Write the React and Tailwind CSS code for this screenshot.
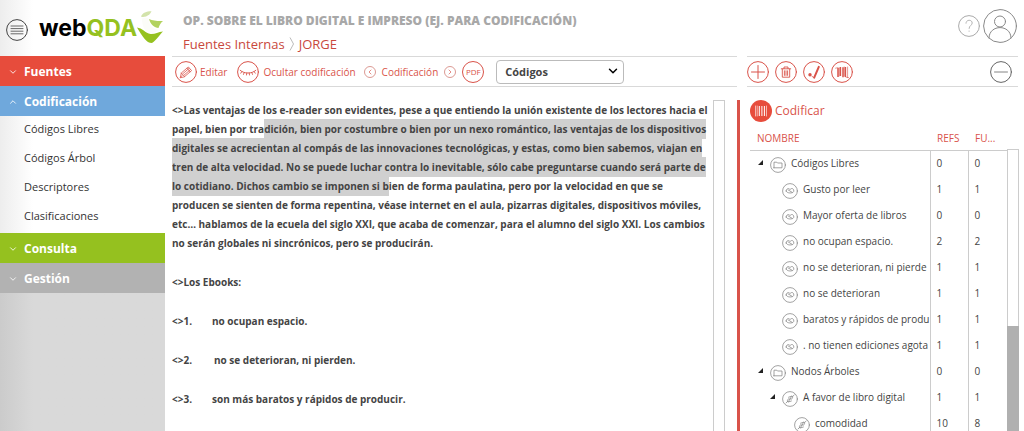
import React from 'react';
import { ChevronDown, ChevronUp, ChevronLeft, ChevronRight } from 'lucide-react';

const sections = [
  { title: 'Fuentes', color: 'bg-[#e74c3c]' },
  {
    title: 'Codificación',
    color: 'bg-[#6fa8dc]',
    items: ['Códigos Libres', 'Códigos Árbol', 'Descriptores', 'Clasificaciones'],
  },
  { title: 'Consulta', color: 'bg-[#95c11f]' },
  { title: 'Gestión', color: 'bg-[#b2b2b2]' },
];

const rows = [
  { name: 'Códigos Libres', refs: 0, sources: 0, level: 0, kind: 'folder', open: true },
  { name: 'Gusto por leer', refs: 1, sources: 1, level: 1, kind: 'code' },
  { name: 'Mayor oferta de libros', refs: 0, sources: 0, level: 1, kind: 'code' },
  { name: 'no ocupan espacio.', refs: 2, sources: 2, level: 1, kind: 'code' },
  { name: 'no se deterioran, ni pierde', refs: 1, sources: 1, level: 1, kind: 'code' },
  { name: 'no se deterioran', refs: 1, sources: 1, level: 1, kind: 'code' },
  { name: 'baratos y rápidos de produ', refs: 1, sources: 1, level: 1, kind: 'code' },
  { name: '. no tienen ediciones agota', refs: 1, sources: 1, level: 1, kind: 'code' },
  { name: 'Nodos Árboles', refs: 0, sources: 0, level: 0, kind: 'folder', open: true },
  { name: 'A favor de libro digital', refs: 1, sources: 1, level: 1, kind: 'tree', open: true },
  { name: 'comodidad', refs: 10, sources: 8, level: 2, kind: 'tree' },
];

const indent = ['pl-2', 'pl-5', 'pl-8'];

const Svg = ({ size = 'size-[22px]', box = 22, children }) => (
  <svg className={`${size} shrink-0`} viewBox={`0 0 ${box} ${box}`} fill="none" stroke="currentColor" strokeLinecap="round" strokeLinejoin="round" aria-hidden="true">
    {children}
  </svg>
);

const Ring = () => <circle cx="11" cy="11" r="10.4" strokeWidth="1" />;

const MenuIcon = () => (
  <Svg>
    <Ring />
    <path d="M5 7h12M5 9.6h12M5 12.2h12M5 14.8h12" strokeWidth="0.8" />
  </Svg>
);

const PencilIcon = () => (
  <Svg>
    <Ring />
    <path d="M5.4 16.4l.9-4.4 7-6 3.3 3.6-7 6zM6.3 12l3.3 3.6M12 7.2l3.2 3.7M8 12.6l6-5.2M9.2 14l6-5.2M5.4 16.4l1.7-1.8" strokeWidth="0.8" />
  </Svg>
);

const EyeIcon = () => (
  <Svg>
    <Ring />
    <path d="M3.2 9.3c2.2 1.9 4.8 2.7 7.8 2.7s5.6-.8 7.8-2.7M4.8 10.6l-1 1.6M7.2 11.6l-.7 1.8M9.8 12l-.3 2M12.2 12l.3 2M14.8 11.6l.7 1.8M17.2 10.6l1 1.6" strokeWidth="0.9" />
  </Svg>
);

const PlusIcon = () => (
  <Svg>
    <Ring />
    <path d="M11 4.5v13M4.5 11h13" strokeWidth="1" />
  </Svg>
);

const MinusIcon = () => (
  <Svg>
    <Ring />
    <path d="M4.5 11h13" strokeWidth="0.8" />
  </Svg>
);

const TrashIcon = () => (
  <Svg>
    <Ring />
    <path d="M6.3 7.8h9.4M9 7.6V6h4v1.6M7.3 8v8.2h7.4V8M9.4 9.8v4.6M11 9.8v4.6M12.6 9.8v4.6" strokeWidth="0.9" />
  </Svg>
);

const BrushIcon = () => (
  <Svg>
    <Ring />
    <path d="M15.8 5.8L11.2 16.6" strokeWidth="2" />
    <circle cx="7" cy="13.8" r="1.7" fill="currentColor" stroke="none" />
    <path d="M9 15.4l2 1.2" strokeWidth="0.8" />
  </Svg>
);

const UncodeIcon = () => (
  <Svg>
    <Ring />
    <path d="M7 7v9M9.4 6v9M12 6.3v10M14.4 6v10" strokeWidth="1.5" strokeLinecap="butt" />
    <path d="M16.6 6v10.6M8.2 7v8M13.2 6v9M4.6 7.2l2.4-.6M15 16.2l2.6.4" strokeWidth="0.6" />
  </Svg>
);

const CodeBadge = () => (
  <Svg>
    <circle cx="11" cy="11" r="11" fill="#e74c3c" stroke="none" />
    <path d="M5.5 6v10M7.2 6v10M16.5 6v10" stroke="#fff" strokeWidth="0.6" />
    <path d="M9.3 6v10M11.9 6v10M14.4 6v10" stroke="#fff" strokeWidth="1" strokeLinecap="butt" />
  </Svg>
);

const HelpIcon = () => (
  <Svg>
    <Ring />
    <path d="M8 8.2c0-4 6.2-3.8 6.2-.2 0 2.6-3.1 2.2-3.1 5.4M11.1 16v.3" strokeWidth="0.9" />
  </Svg>
);

const UserIcon = () => (
  <Svg size="size-[34px]" box={34}>
    <circle cx="17" cy="17" r="16.4" />
    <circle cx="17" cy="12.5" r="5.5" />
    <path d="M6 29c0-14 22-14 22 0" />
  </Svg>
);

const rowGlyphs = {
  folder: <path d="M4 10.8V5.2h2.8l.7.8H12v4.8H4z" strokeWidth="0.8" />,
  code: (
    <path d="M4.2 8c0-3 3-3 3.8-1.5C9 5 11.8 5 11.8 8c0 2.7-7.6 2.7-7.6 0zM6 6.8l4.2 2.6" strokeWidth="0.8" />
  ),
  tree: (
    <path d="M4 12l1.8-1.8M10.4 5.8L12.2 4M5.5 10.4c-.6-1.6.8-3 2.2-2.6l-1 2.8zM10.5 5.6c.6 1.6-.8 3-2.2 2.6l1-2.8zM6.8 10.8l2.6-.8M6.6 6.2l2.6-.8" strokeWidth="0.8" />
  ),
};

const RowIcon = ({ kind }) => (
  <span className="mt-1 text-[#8a8a8a]">
    <Svg size="size-4" box={16}>
      <circle cx="8" cy="8" r="7.4" strokeWidth="0.8" />
      {rowGlyphs[kind]}
    </Svg>
  </span>
);

const Logo = () => (
  <div className="flex items-center" aria-label="webQDA">
    <span className="font-['Inter',sans-serif] text-[23px] leading-7 font-bold text-black">
      web<span className="text-[#95c11f]">QDA</span>
    </span>
    <svg className="h-[34px] w-[27px]" viewBox="0 0 27 34" aria-hidden="true">
      <path d="M4 5.5C6 1.5 9 .5 14.500.3 13.500 3 11.500 4.500 9 5.500 7 6 5.500 6.300 4 5.500z" fill="#d3e3ab" />
      <path d="M12 8c4 1.500 7.500 2.200 14 2-2.500 2-3.500 4-4.500 7-4-.5-8-3.500-9.500-9z" fill="#b2d25f" />
      <path d="M5 7.500c2-1 4-1 6.500 0 .5 6 4 10.500 10 11.500-2 1.500-5 3.500-8 4.500C8 21 5 15 5 7.500z" fill="#fbfcf8" />
      <path d="M0 16.500c5 .5 8.500 5.500 13.500 6.500 4 .5 7.500-2 12.500-2.500-3.500 3-6 8.500-11 11.500C9 32 6 26 0 16.500z" fill="#95c11f" />
    </svg>
  </div>
);

const Sidebar = () => (
  <aside className="w-[165px] shrink-0 flex flex-col bg-linear-to-r from-[#ededed] to-white to-20%">
    <div className="h-14 shrink-0 flex items-center gap-[11px] pl-1.5 text-[#444]">
      <button type="button" aria-label="Menú" className="mt-1"><MenuIcon /></button>
      <Logo />
    </div>
    <nav className="flex flex-col">
      {sections.map((s) => (
        <div key={s.title}>
          <button type="button" className={`w-full h-[30px] flex items-center gap-1.5 pl-2 pt-0.5 text-xs font-bold text-white ${s.color}`}>
            {s.items ? <ChevronUp className="size-2.5" /> : <ChevronDown className="size-2.5" />}
            {s.title}
          </button>
          {s.items && (
            <ul className="pb-px">
              {s.items.map((item) => (
                <li key={item}>
                  <a href="#" className="h-[29px] flex items-center pl-6 pb-0.5 text-[11px] text-[#333]">{item}</a>
                </li>
              ))}
            </ul>
          )}
        </div>
      ))}
    </nav>
    <div className="grow bg-linear-to-r from-[#cbcbcb] to-[#d9d9d9] to-20%" />
  </aside>
);

const Document = () => (
  <article className="grow overflow-hidden pt-px text-[10px] leading-[19px] font-bold text-[#444]">
    <p className="mb-5">
      &lt;&gt;Las ventajas de los e-reader son evidentes, pese a que entiendo la unión existente de los lectores hacia el papel, bien por tra
      <mark className="bg-[#d0d0d0] text-inherit py-[3px]">dición, bien por costumbre o bien por un nexo romántico, las ventajas de los dispositivos digitales se acrecientan al compás de las innovaciones tecnológicas, y estas, como bien sabemos, viajan en tren de alta velocidad. No se puede luchar contra lo inevitable, sólo cabe preguntarse cuando será parte de lo cotidiano. Dichos cambio se imponen si b</mark>
      ien de forma paulatina, pero por la velocidad en que se producen se sienten de forma repentina, véase internet en el aula, pizarras digitales, dispositivos móviles, etc… hablamos de la ecuela del siglo XXI, que acaba de comenzar, para el alumno del siglo XXI. Los cambios no serán globales ni sincrónicos, pero se producirán.
    </p>
    <p className="mb-5">&lt;&gt;Los Ebooks:</p>
    <p className="mb-5 flex"><span className="w-10">&lt;&gt;1.</span>no ocupan espacio.</p>
    <p className="mb-5 flex"><span className="w-[42px]">&lt;&gt;2.</span>no se deterioran, ni pierden.</p>
    <p className="flex"><span className="w-10">&lt;&gt;3.</span>son más baratos y rápidos de producir.</p>
  </article>
);

const Editor = () => (
  <main className="grow min-w-0 flex flex-col pl-[7px]">
    <div className="h-14 shrink-0 pl-[11px] pt-3">
      <h1 className="text-xs leading-[18px] font-extrabold text-[#a8a8a8]">OP. SOBRE EL LIBRO DIGITAL E IMPRESO (EJ. PARA CODIFICACIÓN)</h1>
      <div className="flex items-center text-[13px] leading-7 text-[#c9483d]">
        <a href="#">Fuentes Internas</a>
        <svg className="mx-1 h-3.5 w-1.5 text-[#bbb]" viewBox="0 0 6 14" fill="none" stroke="currentColor" aria-hidden="true">
          <path d="M1 .5L4.500 7 1 13.500" />
        </svg>
        <span>JORGE</span>
      </div>
    </div>
    <div className="h-[31px] shrink-0 flex items-center border-y border-[#d9d9d9] pl-[3px] pt-px text-[10px] text-[#d9534a]">
      <button type="button" className="flex items-center gap-[3px]"><PencilIcon />Editar</button>
      <button type="button" className="ml-2.5 flex items-center gap-1"><EyeIcon />Ocultar codificación</button>
      <button type="button" aria-label="Anterior" className="ml-2 rounded-full border border-[#dc9a94] p-px"><ChevronLeft className="size-2" /></button>
      <span className="mx-1.5">Codificación</span>
      <button type="button" aria-label="Siguiente" className="rounded-full border border-[#dc9a94] p-px"><ChevronRight className="size-2" /></button>
      <button type="button" className="ml-1.5 size-[22px] rounded-full border border-[#d9534a] text-[8px]">PDF</button>
      <div className="relative ml-3">
        <select aria-label="Tipo" className="block h-6 w-32 appearance-none rounded-sm border border-[#bbb] bg-white pl-2 text-[11px] font-bold text-[#444]">
          <option>Códigos</option>
        </select>
        <ChevronDown className="pointer-events-none absolute right-1 top-1 size-3.5 text-black" strokeWidth={2.5} />
      </div>
    </div>
    <div className="grow min-h-0 flex pt-[13px] pr-3">
      <Document />
      <div className="w-3 shrink-0 border border-b-0 border-[#ccc]" />
    </div>
  </main>
);

const CodeTable = () => (
  <table className="w-full table-fixed text-[10px] text-[#444]">
    <colgroup>
      <col />
      <col className="w-[38px]" />
      <col className="w-[39px]" />
    </colgroup>
    <thead>
      <tr className="h-[27px] border-b border-[#ccc] text-left text-[#d9534a]">
        <th className="pl-[7px] pt-1 font-normal">NOMBRE</th>
        <th className="pl-[7px] pt-1 font-normal">REFS</th>
        <th className="pl-[7px] pt-1 font-normal">FU...</th>
      </tr>
    </thead>
    <tbody>
      {rows.map((r) => (
        <tr key={r.name} className="h-[26px]">
          <td className="overflow-hidden whitespace-nowrap">
            <div className={`flex items-center ${indent[r.level]}`}>
              <span className="w-3 shrink-0">
                {r.open && (
                  <svg className="size-1.5" viewBox="0 0 6 6" aria-hidden="true"><path d="M5 0v5H0z" fill="#222" /></svg>
                )}
              </span>
              <RowIcon kind={r.kind} />
              <span className="ml-[5px]">{r.name}</span>
            </div>
          </td>
          <td className="border-l border-[#ccc] pl-1.5">{r.refs}</td>
          <td className="border-l border-[#ccc] pl-1.5">{r.sources}</td>
        </tr>
      ))}
    </tbody>
  </table>
);

const CodingPanel = () => (
  <section className="w-[287px] shrink-0 flex flex-col">
    <div className="h-14 shrink-0 flex items-center justify-end gap-[3px] pr-[7px] pb-1 text-[#888]">
      <button type="button" aria-label="Ayuda" className="text-[#aaa]"><HelpIcon /></button>
      <button type="button" aria-label="Usuario"><UserIcon /></button>
    </div>
    <div className="ml-2.5 mr-1.5 h-[31px] shrink-0 flex items-center gap-1.5 border-y border-[#d9d9d9] pt-px text-[#d9534a]">
      <button type="button" aria-label="Añadir"><PlusIcon /></button>
      <button type="button" aria-label="Eliminar"><TrashIcon /></button>
      <button type="button" aria-label="Destacar"><BrushIcon /></button>
      <button type="button" aria-label="Descodificar"><UncodeIcon /></button>
      <button type="button" aria-label="Contraer" className="ml-auto mr-1.5 text-[#666]"><MinusIcon /></button>
    </div>
    <div className="mt-[13px] grow min-h-0 overflow-hidden border-l-3 border-[#d9534a] pl-2.5">
      <button type="button" className="flex h-[22px] items-center gap-[3px] text-xs text-[#d9534a]"><CodeBadge />Codificar</button>
      <div className="flex pt-px pr-[5px]">
        <div className="grow min-w-0"><CodeTable /></div>
        <div className="mt-[26px] w-3 shrink-0 flex flex-col border border-[#ccc]">
          <div className="h-[176px]" />
          <div className="-mx-px grow bg-[#b0b0b0]" />
        </div>
      </div>
    </div>
  </section>
);

export default function App() {
  return (
    <div className="h-screen flex overflow-hidden bg-white font-['Open_Sans',sans-serif]">
      <Sidebar />
      <Editor />
      <CodingPanel />
    </div>
  );
}
